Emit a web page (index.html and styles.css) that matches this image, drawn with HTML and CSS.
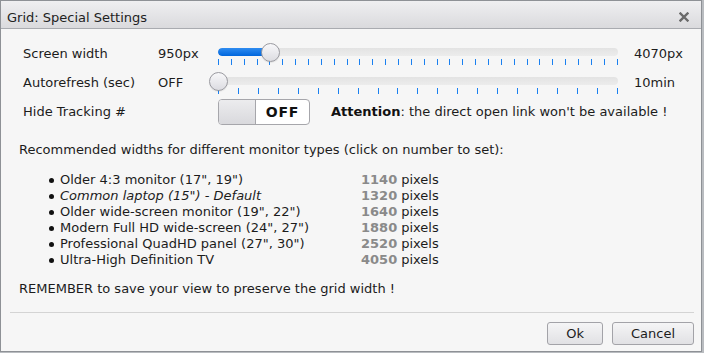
FILE: index.html
```html
<!DOCTYPE html>
<html>
<head>
<meta charset="utf-8">
<link rel="stylesheet" href="styles.css">
</head>
<body>
<div class="dialog">
  <div class="titlebar">
    <span class="title">Grid: Special Settings</span>
    <span class="close"><svg width="10" height="10" viewBox="0 0 10 10"><path d="M1.5 1.5 L8.5 8.5 M8.5 1.5 L1.5 8.5" stroke="#6a6a6a" stroke-width="2.4" stroke-linecap="square"/></svg></span>
  </div>
  <div class="content">
    <div class="settings">
      <div class="row">
        <span class="label">Screen width</span>
        <span class="value">950px</span>
        <div class="slider">
          <div class="track"><div class="fill" style="width:13%"></div></div>
          <div class="thumb" style="left:13%"></div>
          <div class="ticks">
            <i></i><i></i><i></i><i></i><i></i><i></i><i></i><i></i><i></i><i></i><i></i><i></i><i></i><i></i><i></i><i></i>
            <i></i><i></i><i></i><i></i><i></i><i></i><i></i><i></i><i></i><i></i><i></i><i></i><i></i><i></i><i></i><i></i>
          </div>
        </div>
        <span class="end">4070px</span>
      </div>
      <div class="row row2">
        <span class="label">Autorefresh (sec)</span>
        <span class="value">OFF</span>
        <div class="slider">
          <div class="track"></div>
          <div class="thumb" style="left:0%"></div>
          <div class="ticks">
            <i></i><i></i><i></i><i></i><i></i><i></i><i></i><i></i><i></i><i></i><i></i>
            <i></i><i></i><i></i><i></i><i></i><i></i><i></i><i></i><i></i><i></i>
          </div>
        </div>
        <span class="end">10min</span>
      </div>
      <div class="row row3">
        <span class="label wide">Hide Tracking #</span>
        <div class="toggle"><span class="knob"></span><span class="state">OFF</span></div>
        <span class="note"><b>Attention</b>: the direct open link won't be available !</span>
      </div>
    </div>
    <p class="intro">Recommended widths for different monitor types (click on number to set):</p>
    <ul class="widths">
      <li><span class="name">Older 4:3 monitor (17", 19")</span><b>1140</b> pixels</li>
      <li><span class="name default">Common laptop (15") - Default</span><b>1320</b> pixels</li>
      <li><span class="name">Older wide-screen monitor (19", 22")</span><b>1640</b> pixels</li>
      <li><span class="name">Modern Full HD wide-screen (24", 27")</span><b>1880</b> pixels</li>
      <li><span class="name">Professional QuadHD panel (27", 30")</span><b>2520</b> pixels</li>
      <li><span class="name">Ultra-High Definition TV</span><b>4050</b> pixels</li>
    </ul>
    <p class="remember">REMEMBER to save your view to preserve the grid width !</p>
  </div>
  <div class="footer">
    <button class="btn">Ok</button>
    <button class="btn">Cancel</button>
  </div>
</div>
</body>
</html>
```

FILE: styles.css
```css
html, body {
  margin: 0;
  padding: 0;
}
body {
  background: #b9bcc0;
  font-family: "DejaVu Sans", Verdana, sans-serif;
  font-size: 13px;
  line-height: 16px;
  color: #1c1c1c;
}
.dialog {
  width: 700px;
  height: 350px;
  border: 1px solid #8e9196;
  background: #f6f6f6;
  display: flex;
  flex-direction: column;
}
.titlebar {
  display: flex;
  justify-content: space-between;
  align-items: flex-start;
  padding: 9px 8px 2px 6px;
  background: linear-gradient(#efeff1, #dadadd);
  border-bottom: 1px solid #a9abb0;
  color: #222;
}
.close {
  display: flex;
  margin-top: 2px;
  margin-right: 4px;
}
.content {
  padding: 14px 18px 0 18px;
}
.settings {
  margin-left: 4px;
}
.row {
  display: flex;
  align-items: center;
  height: 22px;
}
.row2 {
  margin-top: 7px;
}
.row3 {
  margin-top: 5px;
  height: 26px;
}
.label {
  width: 135px;
}
.label.wide {
  width: 195px;
}
.value {
  width: 60px;
}
.slider {
  position: relative;
  width: 400px;
  height: 22px;
}
.track {
  margin-top: 5px;
  height: 8px;
  border-radius: 4px;
  background: linear-gradient(#e3e3e3, #ececec);
  overflow: hidden;
}
.fill {
  height: 100%;
  background: linear-gradient(#2f8cf0, #0066dd);
  border-radius: 4px 0 0 4px;
}
.thumb {
  position: absolute;
  top: 0;
  width: 17px;
  height: 17px;
  margin-left: -9px;
  border-radius: 50%;
  border: 1px solid #9a9aa0;
  background: linear-gradient(#f8f8fa, #dcdce1);
  box-shadow: 0 1px 1px rgba(0,0,0,0.08);
}
.ticks {
  display: flex;
  justify-content: space-between;
  margin-top: 3px;
  height: 6px;
}
.ticks i {
  display: block;
  width: 1px;
  height: 6px;
  background: #1a80f0;
}
.end {
  margin-left: 16px;
}
.toggle {
  display: flex;
  width: 90px;
  height: 24px;
  border: 1px solid #a6a6ab;
  border-radius: 4px;
  overflow: hidden;
  background: #fff;
}
.knob {
  width: 36px;
  border-right: 1px solid #a6a6ab;
  background: linear-gradient(#ececee, #d9d9dd);
}
.state {
  flex: 1;
  display: flex;
  align-items: center;
  justify-content: center;
  font-weight: bold;
  font-size: 14px;
  letter-spacing: 0.8px;
  color: #111;
}
.note {
  margin-left: 21px;
}
.note b {
  color: #111;
}
.intro {
  margin: 17px 0 0 0;
}
.widths {
  margin: 14px 0 0 0;
  padding-left: 41px;
}
.widths li {
  display: flex;
}
.widths li::before {
  content: "";
  width: 5px;
  height: 5px;
  border-radius: 50%;
  background: #111;
  margin: 6px 6px 0 -11px;
}
.name {
  width: 301px;
}
.default {
  font-style: italic;
}
.widths b {
  color: #8a8a8a;
  margin-right: 4px;
}
.remember {
  margin: 13px 0 0 0;
}
.footer {
  margin: auto 7px 0 9px;
  border-top: 1px solid #d4d4d4;
  padding: 9px 0 6px 0;
  display: flex;
  justify-content: flex-end;
  gap: 9px;
}
.btn {
  font-family: "DejaVu Sans", Verdana, sans-serif;
  font-size: 13px;
  line-height: 16px;
  height: 23px;
  padding: 0 18px;
  border: 1px solid #a3a3a8;
  border-radius: 3px;
  background: linear-gradient(#f5f5f6, #e1e1e4);
  color: #1c1c1c;
}
```
